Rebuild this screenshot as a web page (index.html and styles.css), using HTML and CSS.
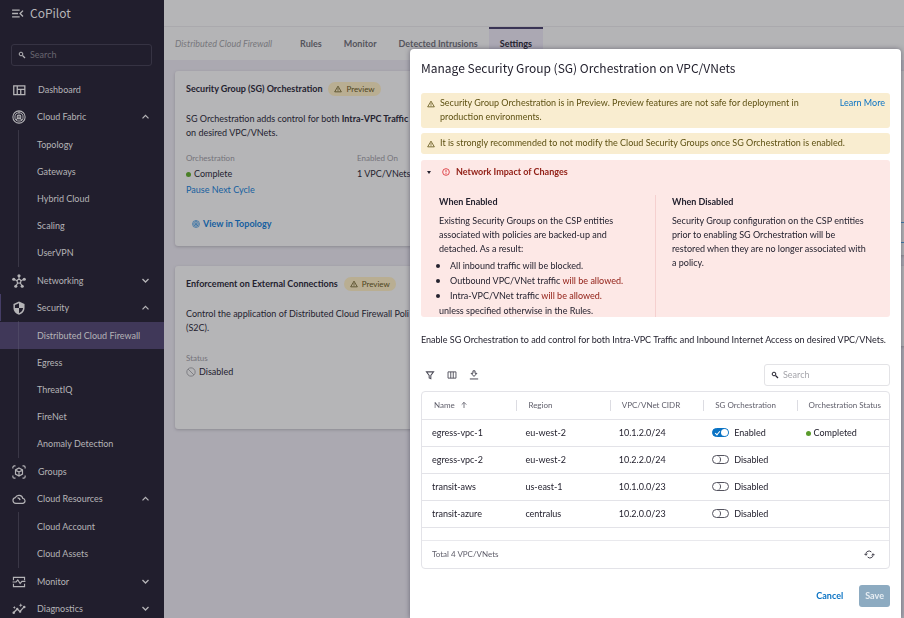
FILE: index.html
```html
<!DOCTYPE html>
<html lang="en">
<head>
<meta charset="utf-8">
<title>CoPilot</title>
<link rel="stylesheet" href="styles.css">
</head>
<body>
<svg class="sprite" aria-hidden="true">
  <symbol id="i-menu" viewBox="0 0 24 24"><path d="M2 4.500h14v2.600H2zM2 10.700h11v2.600H2zM2 17h14v2.600H2zM23 7.500l-1.700-1.700-6.300 6.300 6.300 6.300 1.700-1.700-4.500-4.600z" fill="currentColor"/></symbol>
  <symbol id="i-search" viewBox="0 0 24 24"><circle cx="9" cy="9" r="5.500" fill="none" stroke="currentColor" stroke-width="3"/><path d="M13.500 13.500L21 21" stroke="currentColor" stroke-width="3.500"/></symbol>
  <symbol id="i-dash" viewBox="0 0 24 24"><path d="M3 5h19v15H3zM9 5v15M9 11h13M15 11v9" fill="none" stroke="currentColor" stroke-width="2.200"/></symbol>
  <symbol id="i-fabric" viewBox="0 0 24 24"><g fill="none" stroke="currentColor" stroke-width="1.800"><circle cx="12" cy="12" r="10.500"/><circle cx="12" cy="12" r="7" stroke-width="1.600"/><circle cx="12" cy="12" r="3.200"/><path d="M7 17l3-3M14 14l3 4M12 2v3"/></g><circle cx="12" cy="12" r="1.500" fill="currentColor"/></symbol>
  <symbol id="i-net" viewBox="0 0 24 24"><g fill="none" stroke="currentColor" stroke-width="2"><circle cx="12" cy="12.500" r="3.300"/><path d="M12 4v5M4 9.500l5 2M20 9.500l-5 2M7 20l3-5M17 20l-3-5"/></g><g fill="currentColor"><circle cx="12" cy="3" r="2.700"/><circle cx="3" cy="9" r="2.700"/><circle cx="21" cy="9" r="2.700"/><circle cx="6.500" cy="21" r="2.700"/><circle cx="17.500" cy="21" r="2.700"/></g></symbol>
  <symbol id="i-shield" viewBox="0 0 24 24"><path d="M12 1L2.500 5v6.500C2.500 17.300 6.500 21.800 12 23.500c5.500-1.700 9.500-6.200 9.500-12V5z" fill="currentColor"/><path d="M12 4v8H5V6.800zM12 12h7c-.5 4.500-3 7.300-7 8.800z" class="cut"/></symbol>
  <symbol id="i-groups" viewBox="0 0 24 24"><path d="M1.500 6V4a2.500 2.500 0 0 1 2.500-2.500h2M18 1.500h2A2.500 2.500 0 0 1 22.500 4v2M22.500 18v2a2.500 2.500 0 0 1-2.500 2.500h-2M6 22.500H4A2.500 2.500 0 0 1 1.500 20v-2M12 5l6 3.500v7L12 19l-6-3.500v-7zM6 8.500l6 3.500 6-3.500M12 12v7" fill="none" stroke="currentColor" stroke-width="2"/></symbol>
  <symbol id="i-cloud" viewBox="0 0 24 24"><path d="M6.500 19.500a5 5 0 0 1-.8-9.900A6.800 6.800 0 0 1 18.500 11a4.300 4.300 0 0 1 .3 8.500zM9.500 10c2.500 0 4 1.500 4.200 4" fill="none" stroke="currentColor" stroke-width="2"/></symbol>
  <symbol id="i-monitor" viewBox="0 0 24 24"><path d="M2.500 9V4h19v5M2.500 15v5h19v-5M1 12h6l3-3.500 4 6 3-3.500h6" fill="none" stroke="currentColor" stroke-width="2"/></symbol>
  <symbol id="i-diag" viewBox="0 0 24 24"><path d="M3 18l6-6 4.500 4.500L21 8" fill="none" stroke="currentColor" stroke-width="2.200"/><g fill="currentColor"><circle cx="3" cy="18.500" r="2.200"/><circle cx="9" cy="12" r="2"/><circle cx="14" cy="16.500" r="2"/><circle cx="21" cy="8.500" r="2.200"/><path d="M15 2l1 2.500L18.500 5.500 16 6.500 15 9l-1-2.500L11.500 5.500 14 4.500zM4 7l.8 1.700L6.500 9.500l-1.700.8L4 12l-.8-1.700L1.500 9.500l1.700-.8z"/></g></symbol>
  <symbol id="i-up" viewBox="0 0 24 24"><path d="M4 17l8-8 8 8" fill="none" stroke="currentColor" stroke-width="3.500"/></symbol>
  <symbol id="i-down" viewBox="0 0 24 24"><path d="M4 8l8 8 8-8" fill="none" stroke="currentColor" stroke-width="3.500"/></symbol>
  <symbol id="i-warn" viewBox="0 0 24 24"><path d="M12 3.500L22 20.500H2zM12 9.500v5M12 16v2.500" fill="none" stroke="currentColor" stroke-width="2.400"/></symbol>
  <symbol id="i-err" viewBox="0 0 24 24"><path d="M12 6v7M12 15.500v3" stroke="currentColor" stroke-width="2.600"/><circle cx="12" cy="12" r="10" fill="none" stroke="currentColor" stroke-width="2.400"/></symbol>
  <symbol id="i-ban" viewBox="0 0 24 24"><circle cx="12" cy="12" r="10" fill="none" stroke="currentColor" stroke-width="2"/><path d="M5 5l14 14" stroke="currentColor" stroke-width="2"/></symbol>
  <symbol id="i-filter" viewBox="0 0 24 24"><path d="M3.500 4.500h17L14 13v8l-4-2v-6z" fill="none" stroke="currentColor" stroke-width="2.500"/></symbol>
  <symbol id="i-cols" viewBox="0 0 24 24"><path d="M2.500 4.500h19v15h-19zM9 4.500v15M15 4.500v15" fill="none" stroke="currentColor" stroke-width="2.200"/></symbol>
  <symbol id="i-dl" viewBox="0 0 24 24"><path d="M9.500 2h5v6H19l-7 7.500L5 8h4.500zM2 21.500h20" fill="none" stroke="currentColor" stroke-width="2.400"/></symbol>
  <symbol id="i-arrow" viewBox="0 0 24 24"><path d="M12 21V4M5 11l7-7 7 7" fill="none" stroke="currentColor" stroke-width="2.500"/></symbol>
  <symbol id="i-sync" viewBox="0 0 24 24"><path d="M4 13V11a7 7 0 0 1 12-4.500M20 11v2a7 7 0 0 1-12 4.500M.8 10.500L4 13.800l3.500-3.300M16.500 13.500L20 10.200l3.200 3.300" fill="none" stroke="currentColor" stroke-width="1.900"/></symbol>
</svg>
<div class="app">
  <nav class="sidebar">
    <header class="brand"><svg class="icon"><use href="#i-menu"/></svg><span>CoPilot</span></header>
    <label class="search side-search"><svg class="icon-s"><use href="#i-search"/></svg><input type="text" placeholder="Search" aria-label="Search menu"></label>
    <a class="item flat" href="#"><svg class="icon"><use href="#i-dash"/></svg>Dashboard</a>
    <a class="item" href="#"><svg class="icon"><use href="#i-fabric"/></svg>Cloud Fabric<svg class="chev"><use href="#i-up"/></svg></a>
    <div class="sub"><a href="#">Topology</a><a href="#">Gateways</a><a href="#">Hybrid Cloud</a><a href="#">Scaling</a><a href="#">UserVPN</a></div>
    <a class="item" href="#"><svg class="icon"><use href="#i-net"/></svg>Networking<svg class="chev"><use href="#i-down"/></svg></a>
    <a class="item current" href="#"><svg class="icon"><use href="#i-shield"/></svg>Security<svg class="chev"><use href="#i-up"/></svg></a>
    <div class="sub"><a class="active" href="#">Distributed Cloud Firewall</a><a href="#">Egress</a><a href="#">ThreatIQ</a><a href="#">FireNet</a><a href="#">Anomaly Detection</a></div>
    <a class="item flat" href="#"><svg class="icon"><use href="#i-groups"/></svg>Groups</a>
    <a class="item" href="#"><svg class="icon"><use href="#i-cloud"/></svg>Cloud Resources<svg class="chev"><use href="#i-up"/></svg></a>
    <div class="sub"><a href="#">Cloud Account</a><a href="#">Cloud Assets</a></div>
    <a class="item" href="#"><svg class="icon"><use href="#i-monitor"/></svg>Monitor<svg class="chev"><use href="#i-down"/></svg></a>
    <a class="item" href="#"><svg class="icon"><use href="#i-diag"/></svg>Diagnostics<svg class="chev"><use href="#i-down"/></svg></a>
  </nav>
  <main class="main">
    <div class="topbar"></div>
    <nav class="tabs"><em>Distributed Cloud Firewall</em><a href="#">Rules</a><a href="#">Monitor</a><a href="#">Detected Intrusions</a><a class="on" href="#">Settings</a></nav>
    <div class="board">
      <div class="column">
        <section class="card">
          <h2>Security Group (SG) Orchestration <span class="pill"><svg class="icon-s"><use href="#i-warn"/></svg>Preview</span></h2>
          <p>SG Orchestration adds control for both <b>Intra-VPC Traffic</b><br>on desired VPC/VNets.</p>
          <div class="facts">
            <div><small>Orchestration</small><span><i class="dot"></i>Complete</span><a href="#">Pause Next Cycle</a></div>
            <div><small>Enabled On</small><span>1 VPC/VNets</span></div>
          </div>
          <a class="topology" href="#"><svg class="icon-s"><use href="#i-fabric"/></svg>View in Topology</a>
        </section>
        <section class="card second">
          <h2>Enforcement on External Connections <span class="pill"><svg class="icon-s"><use href="#i-warn"/></svg>Preview</span></h2>
          <p>Control the application of Distributed Cloud Firewall Poli<br>(S2C).</p>
          <div class="facts"><div><small>Status</small><span><svg class="ban"><use href="#i-ban"/></svg>Disabled</span></div></div>
        </section>
      </div>
      <div class="column"><section class="card tall"><div class="outlined"></div></section><section class="card short"></section></div>
    </div>
  </main>
</div>
<div class="dialog" role="dialog" aria-labelledby="dlg-title">
  <h1 id="dlg-title">Manage Security Group (SG) Orchestration on VPC/VNets</h1>
  <div class="alert"><svg class="icon-s"><use href="#i-warn"/></svg><p>Security Group Orchestration is in Preview. Preview features are not safe for deployment in production environments.</p><a href="#">Learn More</a></div>
  <div class="alert"><svg class="icon-s"><use href="#i-warn"/></svg><p>It is strongly recommended to not modify the Cloud Security Groups once SG Orchestration is enabled.</p></div>
  <details class="impact" open>
    <summary><i class="caret"></i><svg class="icon-s"><use href="#i-err"/></svg>Network Impact of Changes</summary>
    <div class="effects">
      <div>
        <h3>When Enabled</h3>
        <p>Existing Security Groups on the CSP entities associated with policies are backed-up and detached. As a result:</p>
        <ul><li>All inbound traffic will be blocked.</li><li>Outbound VPC/VNet traffic <span>will be allowed.</span></li><li>Intra-VPC/VNet traffic <span>will be allowed.</span></li></ul>
        <p>unless specified otherwise in the Rules.</p>
      </div>
      <div>
        <h3>When Disabled</h3>
        <p>Security Group configuration on the CSP entities prior to enabling SG Orchestration will be restored when they are no longer associated with a policy.</p>
      </div>
    </div>
  </details>
  <p class="lead">Enable SG Orchestration to add control for both Intra-VPC Traffic and Inbound Internet Access on desired VPC/VNets.</p>
  <div class="tools">
    <button type="button" aria-label="Filter"><svg><use href="#i-filter"/></svg></button>
    <button type="button" aria-label="Columns"><svg><use href="#i-cols"/></svg></button>
    <button type="button" aria-label="Download"><svg><use href="#i-dl"/></svg></button>
    <label class="search"><svg class="icon-s"><use href="#i-search"/></svg><input type="text" placeholder="Search" aria-label="Search table"></label>
  </div>
  <div class="grid">
    <table>
      <thead><tr><th><div>Name <svg><use href="#i-arrow"/></svg></div></th><th><div>Region</div></th><th><div>VPC/VNet CIDR</div></th><th><div>SG Orchestration</div></th><th><div>Orchestration Status</div></th></tr></thead>
      <tbody>
        <tr><td>egress-vpc-1</td><td>eu-west-2</td><td>10.1.2.0/24</td><td><label><input type="checkbox" checked>Enabled</label></td><td><i class="dot"></i>Completed</td></tr>
        <tr><td>egress-vpc-2</td><td>eu-west-2</td><td>10.2.2.0/24</td><td><label><input type="checkbox">Disabled</label></td><td></td></tr>
        <tr><td>transit-aws</td><td>us-east-1</td><td>10.1.0.0/23</td><td><label><input type="checkbox">Disabled</label></td><td></td></tr>
        <tr><td>transit-azure</td><td>centralus</td><td>10.2.0.0/23</td><td><label><input type="checkbox">Disabled</label></td><td></td></tr>
      </tbody>
    </table>
    <div class="foot">Total 4 VPC/VNets<button type="button" aria-label="Refresh"><svg><use href="#i-sync"/></svg></button></div>
  </div>
  <div class="actions"><button type="button" class="cancel">Cancel</button><button type="button" class="save">Save</button></div>
</div>
</body>
</html>
```
FILE: styles.css
```css
* { box-sizing: border-box; }
html, body { height: 100%; }
body { margin: 0; overflow: hidden; font: 9px/14px Lato, "Open Sans", sans-serif; color: #24222f; background: #aba9b1; }
h1, h2, h3, p, ul { margin: 0; padding: 0; }
a { text-decoration: none; color: inherit; }
button { border: 0; padding: 0; background: none; font: inherit; color: inherit; }
svg { flex: none; }
.sprite { position: absolute; width: 0; height: 0; }
.icon { width: 14px; height: 14px; }
.icon-s { width: 8px; height: 8px; }
.cut { fill: #211e2d; }
.app { display: flex; height: 100%; }

.sidebar { flex: none; width: 164px; height: 100%; overflow: hidden; background: #211e2d; color: #b5b4b7; }
.brand { display: flex; align-items: center; gap: 6px; height: 26px; padding-left: 11px; font-family: "Noto Sans CJK SC", sans-serif; font-size: 12px; line-height: 26px; }
.brand .icon { width: 13px; height: 13px; }
.search { display: flex; align-items: center; gap: 4px; height: 22px; padding: 0 6px; border: 1px solid #e3e3e6; border-radius: 3px; }
.search input { min-width: 0; flex: 1; border: 0; padding: 0; outline: 0; background: none; font: inherit; color: inherit; }
.search input::placeholder { color: #a5a5ab; opacity: 1; }
.side-search { margin: 18px 12px 10px 11px; border-color: #363343; }
.side-search input::placeholder { color: #68656f; }
.item { display: flex; align-items: center; gap: 11px; height: 27px; padding: 0 14px 0 12px; }
.flat { gap: 12px; }
.current { box-shadow: inset 1px 0 #453d66; }
.chev { width: 9px; height: 9px; margin-left: auto; }
.sub { padding: 1px 0; background: linear-gradient(#3a3746, #3a3746) 18px 0 / 1px 100% no-repeat; }
.sub a { display: block; height: 27px; padding-left: 37px; line-height: 27px; white-space: nowrap; }
.sub .active { background: linear-gradient(#4d4764, #4d4764) 18px 0 / 1px 100% no-repeat #403859; }

.main { flex: 1; min-width: 0; overflow: hidden; }
.topbar { height: 27px; background: #b5b5b7; border-bottom: 1px solid #aaa9ad; }
.tabs { display: flex; height: 33px; padding-left: 11px; background: #b4b4b6; color: #55545d; font-weight: 700; line-height: 30px; white-space: nowrap; }
.tabs em { font-weight: 400; color: #77777c; margin-right: 17px; padding-top: 2px; }
.tabs a { padding: 0 11px; border-top: 2px solid transparent; }
.tabs .on { color: #24222f; background: #aba8b3; border-color: #393454; }
.board { display: flex; gap: 20px; padding: 11px; }
.column { flex: none; width: 100%; display: flex; flex-direction: column; gap: 20px; }
.column:first-child { width: 48%; }
.card { height: 175px; padding: 11px; border-radius: 3px; background: #b5b5b7; box-shadow: 0 1px 3px #8c8a92; white-space: nowrap; }
.second { height: 163px; }
.tall { height: 184px; padding-top: 151px; }
.column:last-child { gap: 11px; }
.short { height: 80px; }
.outlined { height: 21px; border: 1px solid #3f79aa; }
.card h2 { display: flex; align-items: center; gap: 6px; height: 14px; font-size: 9px; font-weight: 700; }
.pill { display: flex; align-items: center; gap: 4px; height: 14px; padding: 0 6px; border-radius: 7px; background: #b9ae92; color: #4d4420; font-weight: 400; font-size: 8px; }
.card p { margin-top: 16px; }
.card b { font-weight: 700; }
.facts { display: flex; margin-top: 11px; }
.second .facts { margin-top: 16px; }
.facts > div { display: flex; flex: none; flex-direction: column; width: 171px; gap: 2px; }
.second .facts > div { gap: 0; }
.facts span { display: flex; align-items: center; }
.facts small { font-size: 8px; color: #74737a; }
.facts a, .topology { color: #155f9f; }
.dot { display: inline-block; width: 5px; height: 5px; margin-right: 3px; border-radius: 50%; background: #5a9b2b; }
.facts .dot { background: #4a7f27; }
.ban { width: 10px; height: 10px; margin-right: 3px; color: #74737a; }
.topology { display: flex; align-items: center; gap: 3px; margin: 20px 0 0 6px; font-weight: 700; }

.dialog { position: fixed; top: 49px; right: 3px; bottom: 0; left: 410px; padding: 10px 11px; overflow: hidden; border-radius: 4px 4px 0 0; background: #fff; box-shadow: 0 0 5px rgba(40, 36, 60, .5); }
.dialog h1 { margin-bottom: 17px; font: 400 12px/17px "Noto Sans CJK SC", sans-serif; }
.alert { display: flex; gap: 5px; padding: 3px 5px 4px 6px; margin-bottom: 5px; border-radius: 3px; background: #f9edd0; color: #5e5113; }
.alert .icon-s { margin-top: 4px; }
.alert p { flex: 1; max-width: 380px; }
.alert p:last-child { max-width: none; }
.alert a { margin-left: auto; color: #0a73c4; white-space: nowrap; }
.impact { height: 157px; margin-top: 6px; overflow: hidden; border-radius: 3px; background: #fde8e6; }
.impact summary { display: flex; align-items: center; height: 24px; padding-left: 6px; color: #922017; font-weight: 700; list-style: none; }
.impact .icon-s { margin: 0 6px 0 11px; color: #d8242c; }
.caret { border: 2px solid transparent; border-top: 3px solid #24222f; border-bottom: 0; }
.effects { display: flex; margin-top: 11px; padding-left: 18px; }
.effects > div { width: 216px; height: 130px; padding-right: 20px; }
.effects > div + div { flex: 1; padding-left: 16px; border-left: 1px solid #f5d0cf; }
.effects h3 { margin-bottom: 5px; font-size: 9px; font-weight: 700; }
.effects ul { margin: 2px 0 1px; padding-left: 11px; }
.effects li::marker { font-size: 11px; }
.effects ul span { color: #922017; }
.lead { margin: 16px 0 17px; white-space: nowrap; }
.tools { display: flex; align-items: center; gap: 12px; padding-left: 4px; margin-bottom: 5px; }
.tools button, .tools button svg { display: block; width: 10px; height: 10px; color: #4b4a56; }
.tools .search { width: 126px; margin-left: auto; }
.grid { border: 1px solid #e3e3e8; border-radius: 4px; }
table { width: 100%; table-layout: fixed; border-collapse: collapse; }
th, td { height: 27px; padding: 0 0 0 10px; text-align: left; border-bottom: 1px solid #e3e3e8; white-space: nowrap; }
th { font-size: 8px; font-weight: 400; color: #5f5e6a; }
th div { height: 11px; padding-left: 2px; line-height: 11px; }
th + th div { margin-left: -9px; padding-left: 11px; border-left: 1px solid #dcdce2; }
th svg { width: 8px; height: 8px; margin-left: 3px; vertical-align: -1px; }
td label { display: flex; align-items: center; gap: 5px; }
td input { appearance: none; flex: none; display: flex; width: 17px; height: 9px; margin: 0; border: 1px solid #55545f; border-radius: 5px; }
td input::before { content: ""; width: 7px; height: 7px; border-right: 1px solid #55545f; border-radius: 50%; }
td input:checked { border-color: #0a73c4; background: #0a73c4; justify-content: space-between; }
td input:checked::before { width: 2px; height: 4px; margin: 1px 0 0 3px; border: solid #fff; border-width: 0 1px 1px 0; border-radius: 0; transform: rotate(40deg); }
td input:checked::after { content: ""; width: 7px; height: 7px; border-radius: 50%; background: #fff; }
.foot { display: flex; align-items: center; height: 28px; margin-top: 12px; padding: 0 14px 0 10px; border-top: 1px solid #e9e9ed; font-size: 8px; color: #5f5e6a; }
.foot button { margin-left: auto; height: 11px; }
.foot svg { display: block; width: 11px; height: 11px; color: #24222f; }
.actions { display: flex; justify-content: flex-end; gap: 16px; margin-top: 16px; font-weight: 700; line-height: 22px; }
.cancel { color: #0a73c4; }
.save { padding: 0 6px; border-radius: 3px; background: #8dabc1; color: #e8eef3; }
```
